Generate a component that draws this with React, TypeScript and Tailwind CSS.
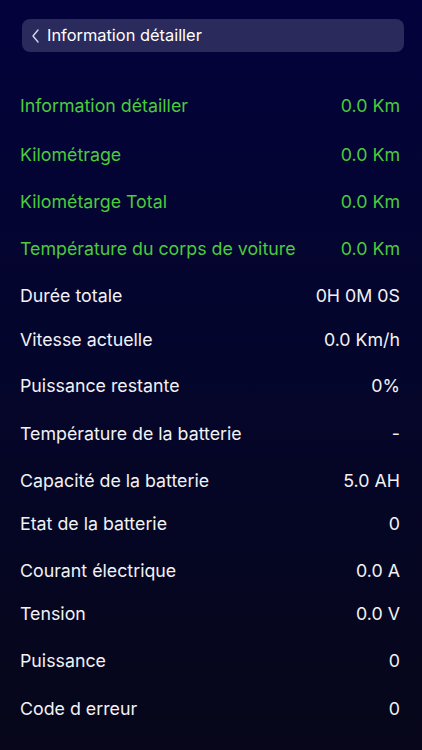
import React from "react";

const rows: { label: string; value: string; green?: boolean; gap: number }[] = [
  { label: "Information détailler", value: "0.0 Km", green: true, gap: 3 },
  { label: "Kilométrage", value: "0.0 Km", green: true, gap: 1 },
  { label: "Kilométarge Total", value: "0.0 Km", green: true, gap: 1 },
  { label: "Température du corps de voiture", value: "0.0 Km", green: true, gap: 1 },
  { label: "Durée totale", value: "0H 0M 0S", gap: -2 },
  { label: "Vitesse actuelle", value: "0.0 Km/h", gap: 0 },
  { label: "Puissance restante", value: "0%", gap: 2 },
  { label: "Température de la batterie", value: "-", gap: 1 },
  { label: "Capacité de la batterie", value: "5.0 AH", gap: -3 },
  { label: "Etat de la batterie", value: "0", gap: 1 },
  { label: "Courant électrique", value: "0.0 A", gap: -3 },
  { label: "Tension", value: "0.0 V", gap: 1 },
  { label: "Puissance", value: "0", gap: 2 },
  { label: "Code d erreur", value: "0", gap: 0 },
];

export default function App() {
  return (
    <div
      className="w-[422px] h-[750px] overflow-hidden bg-gradient-to-b from-[#03023c] to-[#07061a] text-white"
      style={{ fontFamily: "Inter, 'Noto Sans', sans-serif" }}
    >
      <div className="pt-[19px] pl-[22px] pr-[18px]">
        <div className="h-[33px] rounded-[8px] bg-[#2b2a5c] flex items-center pl-[9px] gap-[7px]">
          <svg width="9" height="16" viewBox="0 0 9 16" fill="none">
            <path d="M7 2L2 8l5 6" stroke="#d8d8e8" strokeWidth="1.4" strokeLinecap="round" strokeLinejoin="round" />
          </svg>
          <span className="text-[16.4px] text-white">Information détailler</span>
        </div>
      </div>
      <div className="mt-[31px] pl-[20px] pr-[22px] flex flex-col">
        {rows.map((r) => (
          <div
            key={r.label}
            className={`h-[46px] flex items-center justify-between text-[17.8px] ${r.green ? "text-[#4ccb3c]" : "text-[#f2f2f5]"}`}
            style={{ marginBottom: r.gap }}
          >
            <span>{r.label}</span>
            <span>{r.value}</span>
          </div>
        ))}
      </div>
    </div>
  );
}
